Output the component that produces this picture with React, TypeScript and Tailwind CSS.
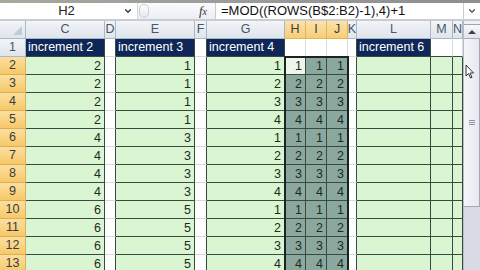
import { ChevronDown } from 'lucide-react'

const font = "font-['Liberation_Sans',Arial,sans-serif]"
const cols = 'grid grid-cols-[26px_79px_11px_79px_12px_78px_21px_21px_21px_9px_74px_22px_10px]'
const letters = ['', 'C', 'D', 'E', 'F', 'G', 'H', 'I', 'J', 'K', 'L', 'M', 'N']
const rows = [2, 3, 4, 5, 6, 7, 8, 9, 10, 11, 12, 13]

const dark = 'border-[#3a4a3c]'

function HeaderCell({ label, index }: { label: string; index: number }) {
  if (index === 0) {
    return (
      <div className="relative h-[18px] border-r border-b border-[#a9b8c9] bg-gradient-to-b from-[#f1f4f8] to-[#dfe5ec]">
        <div className="absolute right-[3px] bottom-[3px] h-0 w-0 border-b-[9px] border-l-[9px] border-b-[#c3cad3] border-l-transparent" />
      </div>
    )
  }
  const selected = index >= 6 && index <= 8
  return (
    <div
      className={
        selected
          ? 'flex h-[18px] items-center justify-center border-r border-b border-[#e2b45c] bg-gradient-to-b from-[#fbe3a9] to-[#f6cd77] text-[12.5px] text-[#3c3c3c]'
          : 'flex h-[18px] items-center justify-center border-r border-b border-[#a9b8c9] bg-gradient-to-b from-[#f1f4f8] to-[#dfe5ec] text-[12.5px] text-[#4b5563]'
      }
    >
      {label}
    </div>
  )
}

function FirstRow() {
  const titles: Record<number, string> = { 1: 'increment 2', 3: 'increment 3', 5: 'increment 4', 10: 'increment 6' }
  return (
    <>
      <div className="flex h-[18px] items-center justify-center border-r border-b border-[#a9b8c9] bg-gradient-to-b from-[#f1f4f8] to-[#dfe5ec] text-[12.5px] text-[#4b5563]">
        1
      </div>
      {letters.slice(1).map((_, i) => {
        const c = i + 1
        if (titles[c]) {
          return (
            <div key={c} className={`flex h-[18px] items-center overflow-hidden whitespace-nowrap border-r border-b ${dark} bg-[#0f2758] pl-[2px] text-[12.5px] text-white`}>
              {titles[c]}
            </div>
          )
        }
        const gap = c === 2 || c === 4 || c === 9
        return (
          <div
            key={c}
            className={
              gap
                ? `h-[18px] border-r border-b border-b-[#d6d9dd] ${dark} bg-white`
                : `h-[18px] border-r border-b border-r-[#d6d9dd] ${dark} bg-white`
            }
          />
        )
      })}
    </>
  )
}

function DataRow({ r }: { r: number }) {
  const c = 2 * Math.ceil((r - 1) / 4)
  const e = c - 1
  const g = ((r - 2) % 4) + 1
  const values: Record<number, number> = { 1: c, 3: e, 5: g, 6: g, 7: g, 8: g }
  return (
    <>
      <div className="flex h-[18px] items-center justify-center border-r border-b border-[#e0ad55] bg-gradient-to-b from-[#fbdf9f] to-[#f6c968] text-[12.5px] text-[#3c3c3c]">
        {r}
      </div>
      {letters.slice(1).map((_, i) => {
        const col = i + 1
        const gap = col === 2 || col === 4 || col === 9
        if (gap) {
          return <div key={col} className={`h-[18px] border-r border-b border-b-[#d6d9dd] ${dark} bg-white`} />
        }
        const sel = col >= 6 && col <= 8
        const active = sel && col === 6 && r === 2
        const bg = active ? 'bg-[#eef6ec]' : sel ? 'bg-[#8ba89e]' : 'bg-[#d9f5d2]'
        return (
          <div
            key={col}
            className={`flex h-[18px] items-center justify-end overflow-hidden border-r border-b ${dark} ${bg} pt-[2px] pr-[3px] text-[12.5px] text-[#1e2a1e]`}
          >
            {values[col] ?? ''}
          </div>
        )
      })}
    </>
  )
}

function ScrollBar() {
  return (
    <div className="flex w-[17px] flex-col border-l border-[#b9bcc8] bg-[#dcdde6]">
      <div className="h-[4px] border-b border-[#9ea3b0] bg-[#eef0f4]" />
      <div className="flex h-[14px] items-center justify-center border-b border-[#a7acb8] bg-gradient-to-b from-[#f7f8fb] to-[#e2e4ec]">
        <div className="h-0 w-0 border-x-[4px] border-b-[4px] border-x-transparent border-b-[#3b3f48]" />
      </div>
      <div className="flex h-[168px] items-center justify-center border-b border-r border-[#a3a8b6] bg-gradient-to-r from-[#f4f5f9] to-[#e7e9f0]">
        <div className="flex flex-col gap-[1px]">
          <div className="h-[1px] w-[6px] bg-[#8d93a3]" />
          <div className="h-[1px] w-[6px] bg-[#8d93a3]" />
          <div className="h-[1px] w-[6px] bg-[#8d93a3]" />
        </div>
      </div>
      <div className="flex-1 bg-[#d9dae4]" />
    </div>
  )
}

export default function App() {
  return (
    <div className={`h-[270px] w-[480px] overflow-hidden bg-white ${font}`}>
      <div className="h-[3px] bg-gradient-to-r from-[#a3ab9d] via-[#9b9b9b] to-[#8e8e8e]" />

      <div className="flex h-[18px] items-center border-b-2 border-[#c9cdd3] bg-white">
        <div className="flex h-full w-[138px] items-center border-r border-[#d3d7dd]">
          <span className="flex-1 pl-[10px] text-center text-[13px] text-[#222]">H2</span>
          <ChevronDown className="mr-[4px] h-[10px] w-[10px] text-[#333]" strokeWidth={3} />
        </div>
        <div className="flex h-full w-[77px] items-center bg-gradient-to-b from-[#fbfbfc] to-[#eceef2]">
          <div className="ml-[1px] h-[14px] w-[10px] rounded-full border border-[#c9ced6] bg-gradient-to-b from-white to-[#e4e7ec]" />
          <span className="ml-auto mr-[8px] font-['Liberation_Serif',serif] text-[13px] italic text-[#333]">
            f<span className="text-[10px]">x</span>
          </span>
        </div>
        <div className="flex h-full flex-1 items-center border-l border-[#c7ccd3] pl-[5px] text-[13px] text-[#111]">
          =MOD((ROWS(B$2:B2)-1),4)+1
        </div>
        <div className="flex h-full w-[17px] items-center justify-center border-l border-[#c7ccd3]">
          <ChevronDown className="h-[10px] w-[10px] text-[#555]" strokeWidth={3} />
        </div>
      </div>

      <div className="flex">
        <div className="relative w-[463px]">
          <div className={cols}>
            {letters.map((l, i) => (
              <HeaderCell key={i} label={l} index={i} />
            ))}
            <FirstRow />
            {rows.map((r) => (
              <DataRow key={r} r={r} />
            ))}
          </div>
          <div className="pointer-events-none absolute top-[35px] left-[284px] h-[230px] w-[65px] border-2 border-[#1c241e]" />
        </div>
        <ScrollBar />
      </div>

      <svg className="pointer-events-none absolute top-[64px] left-[465px]" width="10" height="15" viewBox="0 0 10 15">
        <path d="M1 1 L1 12 L3.5 9.5 L5.5 14 L7 13.3 L5 9 L8.5 9 Z" fill="#fff" stroke="#333" strokeWidth="1" />
      </svg>
    </div>
  )
}
